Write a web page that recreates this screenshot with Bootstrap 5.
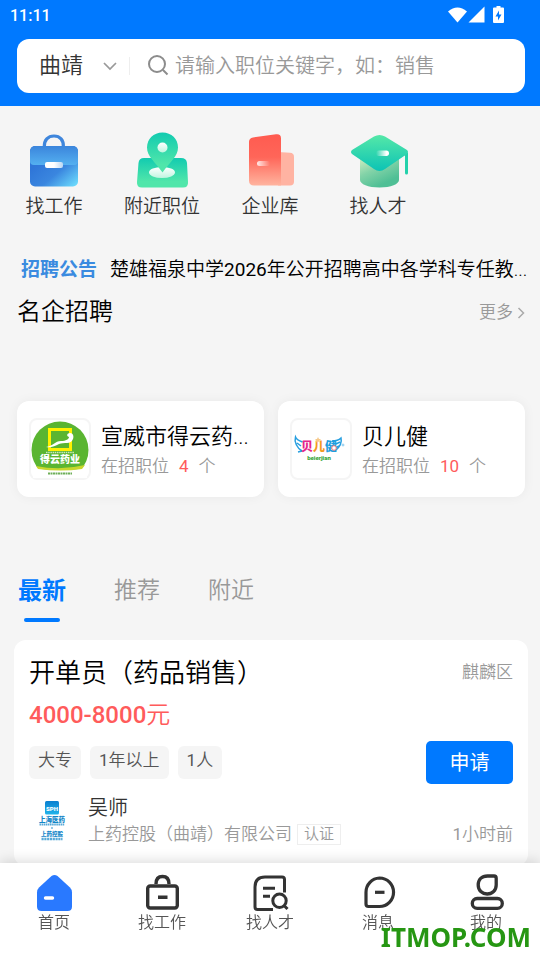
<!DOCTYPE html>
<html lang="zh-CN">
<head>
<meta charset="utf-8">
<meta name="viewport" content="width=device-width, initial-scale=1">
<title>招聘</title>
<link href="https://cdn.jsdelivr.net/npm/bootstrap@5.3.0/dist/css/bootstrap.min.css" rel="stylesheet">
<style>
  :root { --brand: #0079ff; --ink: #333; --muted: #999; --hot: #ff5b5b; --page: #f5f5f5; }
  body { font-family: Roboto, "Noto Sans CJK SC", sans-serif; font-weight: 350; background: var(--page); color: #000; padding-bottom: 94px; }
  a { color: inherit; text-decoration: none; }
  svg { display: block; flex: none; }
  .digits { font-weight: 400; }
  .txt-muted { color: var(--muted); }
  .txt-hot { color: var(--hot); }
  .gutter { padding-left: 17px; padding-right: 15px; }

  .topbar { background: var(--brand); padding-bottom: 13px; }
  .status { height: 31px; padding-left: 10px; padding-right: 34px; font-size: 16px; font-weight: 500; }
  .search { height: 54px; margin-top: 8px; border-radius: 12px; padding-left: 22px; padding-right: 16px; }
  .city { appearance: none; border: 0; background: none; padding: 0; width: 64px; font-size: 22px; color: var(--ink); font-weight: inherit; line-height: 30px; outline: 0; }
  .sep { width: 1px; height: 18px; background: #eee; margin: 0 17px 0 12px; }
  .query { border: 0; outline: 0; padding: 0; margin-left: 6px; font-size: 20px; font-weight: inherit; min-width: 0; line-height: 30px; }
  .query::placeholder { color: var(--muted); opacity: 1; }

  .shortcuts { padding-top: 24px; }
  .shortcuts a { font-size: 19px; line-height: 20px; color: var(--ink); gap: 7px; }

  .notice { margin-top: 39px; padding: 0 8px 0 21px; font-size: 19px; line-height: 28px; gap: 13px; }
  .notice strong { color: #3a8be0; font-weight: 700; }
  .section-title { margin: 12px 0 0; font-size: 24px; line-height: 32px; font-weight: inherit; }
  .more { font-size: 17px; gap: 4px; margin-top: 13px; }

  .firms { margin-top: 73px; gap: 14px; }
  .firm { flex: 1 1 0; min-width: 0; height: 96px; padding: 0 12px; border-radius: 12px; background: #fff; gap: 10px; box-shadow: 0 0 12px rgba(0,0,0,.05); }
  .firm-logo { width: 62px; height: 62px; border: 2px solid #f5f5f5; border-radius: 8px; flex: none; }
  .firm-text { padding-top: 2px; }
  .firm-name { font-size: 22px; line-height: 30px; }
  .firm-open { font-size: 17px; line-height: 24px; gap: 10px; margin-top: 2px; }

  .feeds { margin-top: 78px; gap: 48px; padding-left: 18px; }
  .feeds button { border: 0; background: none; padding: 0 0 15px; font-size: 23px; line-height: 32px; color: var(--muted); font-weight: inherit; position: relative; }
  .feeds .active { color: var(--brand); font-size: 24px; font-weight: 700; }
  .feeds .active::after { content: ""; position: absolute; left: 6px; right: 6px; bottom: 0; height: 4px; border-radius: 2px; background: var(--brand); }

  .job { margin: 18px 12px 0 14px; padding: 15px 15px 20px; border-radius: 12px; background: #fff; }
  .job h3 { font-size: 26px; line-height: 36px; font-weight: inherit; margin: 0; }
  .area { font-size: 17px; }
  .pay { font-size: 24px; line-height: 32px; margin-top: 8px; }
  .pay b { font-weight: 500; }
  .facts { margin-top: 10px; }
  .tags { gap: 9px; }
  .tag { background: var(--page); border-radius: 6px; padding: 0 9px 4px; font-size: 17px; line-height: 29px; color: #555; }
  .apply { background: var(--brand); color: #fff; border: 0; border-radius: 5px; width: 87px; height: 43px; font-size: 20px; }
  .poster { margin-top: 12px; gap: 13px; }
  .poster-name { font-size: 20px; line-height: 24px; color: var(--ink); }
  .poster-firm { font-size: 17px; line-height: 24px; margin-top: 2px; gap: 5px; }
  .verified { border: 1px solid #eee; padding: 0 6px; font-size: 15px; line-height: 19px; }

  .tabs-bottom { background: #fff; height: 97px; padding-top: 9px; box-shadow: 0 -2px 12px rgba(0,0,0,.14); }
  .tabs-bottom a { font-size: 16px; line-height: 20px; color: #555; gap: 1px; }
  .stamp { position: absolute; right: 9px; bottom: 5px; font-family: "Noto Sans", sans-serif; font-weight: 700; font-size: 26px; line-height: 36px; color: #269613; }
</style>
</head>
<body>
<header class="topbar">
  <div class="status d-flex justify-content-between align-items-center text-white">
    <span>11:11</span>
    <svg width="58" height="20" viewBox="0 0 58 20" fill="#fff">
      <path d="M0 5.500Q9.500-2.500 19 5.500L9.500 16.500Z"/>
      <path d="M36.500 .5V16.500H20.500Z"/>
      <path d="M46 1.500h2.500V0h4v1.500H55a1 1 0 0 1 1 1V16a1 1 0 0 1-1 1h-9a1 1 0 0 1-1-1V2.500a1 1 0 0 1 1-1Z"/>
      <path d="M51 4.500l-3.500 6H50v4l3.500-6H51Z" fill="#0079ff"/>
    </svg>
  </div>
  <div class="gutter">
    <form class="search d-flex align-items-center bg-white">
      <select class="city" aria-label="城市"><option>曲靖</option></select>
      <svg width="14" height="10" viewBox="0 0 14 10" fill="none" stroke="#999" stroke-width="1.700"><path d="M1 2l6 6 6-6"/></svg>
      <span class="sep"></span>
      <svg width="22" height="22" viewBox="0 0 22 22" fill="none" stroke="#8c8c8c" stroke-width="2"><circle cx="10" cy="9" r="8"/><path d="M16 15l4.500 4.500"/></svg>
      <input class="query flex-grow-1" type="search" aria-label="搜索职位" placeholder="请输入职位关键字，如：销售">
    </form>
  </div>
</header>

<main>
  <nav class="shortcuts row row-cols-5 g-0">
    <a href="#" class="col d-flex flex-column align-items-center">
      <svg width="60" height="60" viewBox="0 0 60 60">
        <defs>
          <linearGradient id="caseBody" x1=".3" y1=".3" x2="1" y2="1"><stop offset="0" stop-color="#2f76d8"/><stop offset=".45" stop-color="#3a86df"/><stop offset="1" stop-color="#70e2ff"/></linearGradient>
          <linearGradient id="caseFlap" x2="0" y2="1"><stop offset="0" stop-color="#3b85dc"/><stop offset="1" stop-color="#54b0f0"/></linearGradient>
          <linearGradient id="caseClasp"><stop offset="0" stop-color="#fff"/><stop offset=".5" stop-color="#fff"/><stop offset="1" stop-color="#b9d6f3"/></linearGradient>
        </defs>
        <path d="M20.300 17C20 10 24 6 30 6s9.700 4 9.400 11" fill="none" stroke="#3f86dc" stroke-width="3.200"/>
        <rect x="6" y="16" width="48" height="40.500" rx="5" fill="url(#caseBody)"/>
        <path d="M6 22q0-6 6-6h36q6 0 6 6v9q0 4-4 4H10q-4 0-4-4Z" fill="url(#caseFlap)"/>
        <rect x="21" y="32" width="18" height="6" rx="2" fill="url(#caseClasp)"/>
      </svg>
      <span>找工作</span>
    </a>
    <a href="#" class="col d-flex flex-column align-items-center">
      <svg width="60" height="60" viewBox="0 0 60 60">
        <defs>
          <linearGradient id="pinFill" x2="0" y2="1"><stop offset="0" stop-color="#12cbb0"/><stop offset=".8" stop-color="#50e6aa"/></linearGradient>
          <linearGradient id="pinHole" x2="0" y2="1"><stop offset="0" stop-color="#fff"/><stop offset="1" stop-color="#bff5e0"/></linearGradient>
        </defs>
        <path d="M12 28h37q5.500 0 6 5l1 19q.5 5.500-5 5.500H10q-5.500 0-5-5.500l1.500-19q.5-5 5.500-5Z" fill="url(#pinFill)"/>
        <ellipse cx="30" cy="42.500" rx="13" ry="5.500" fill="url(#pinHole)"/>
        <path d="M30.500 2.500C21.500 2.500 15 9 15 17.500c0 9 8 14 15.500 25C38 31.500 46 26.500 46 17.500 46 9 39.500 2.500 30.500 2.500Z" fill="url(#pinFill)"/>
        <circle cx="30.500" cy="17.500" r="5" fill="url(#pinHole)"/>
      </svg>
      <span>附近职位</span>
    </a>
    <a href="#" class="col d-flex flex-column align-items-center">
      <svg width="60" height="60" viewBox="0 0 60 60">
        <defs>
          <linearGradient id="tower" x2="0" y2="1"><stop offset="0" stop-color="#ff5b50"/><stop offset=".45" stop-color="#ff6659"/><stop offset="1" stop-color="#ffb49f"/></linearGradient>
          <linearGradient id="towerDoor"><stop offset="0" stop-color="#fff" stop-opacity=".85"/><stop offset="1" stop-color="#fff" stop-opacity="0"/></linearGradient>
        </defs>
        <path d="M38 22l12 .8q4 .3 4 4V51.500q0 4-4 4H38Z" fill="#ffb3a2"/>
        <path d="M13 7.500L36 4.200q5-.6 5 4V55.500H14q-5 0-5-5V12q0-4 4-4.500Z" fill="url(#tower)"/>
        <rect x="17" y="31" width="13" height="5" rx="2.500" fill="url(#towerDoor)"/>
      </svg>
      <span>企业库</span>
    </a>
    <a href="#" class="col d-flex flex-column align-items-center">
      <svg width="60" height="60" viewBox="0 0 60 60">
        <defs>
          <linearGradient id="capBase" x1="0" y1=".2" x2=".4" y2="1"><stop offset="0" stop-color="#d3efc2"/><stop offset=".5" stop-color="#83d3a8"/><stop offset="1" stop-color="#4fbf95"/></linearGradient>
          <linearGradient id="capTop" x2="0" y2="1"><stop offset="0" stop-color="#55e8a8"/><stop offset="1" stop-color="#0cc3b5"/></linearGradient>
          <linearGradient id="capButton"><stop offset="0" stop-color="#fff" stop-opacity="0"/><stop offset=".8" stop-color="#fff"/></linearGradient>
        </defs>
        <path d="M12 20H51V50c0 4-8 7.500-19.500 7.500S12 54 12 50Z" fill="url(#capBase)"/>
        <path d="M55 22l5 1V43q0 1.500-1.500 1.500T57 43V26Z" fill="#24d1ab"/>
        <path d="M4 20L26 6.500q5.500-3 11 0L59 20q2 2 0 4L37 39q-5.500 4-11 0L4 24q-2-2 0-4Z" fill="url(#capTop)"/>
        <rect x="28" y="20.500" width="13" height="5.500" rx="2.700" fill="url(#capButton)"/>
      </svg>
      <span>找人才</span>
    </a>
  </nav>

  <div class="notice d-flex">
    <strong class="flex-shrink-0">招聘公告</strong>
    <a href="#" class="text-nowrap">楚雄福泉中学<span class="digits">2026</span>年公开招聘高中各学科专任教...</a>
  </div>

  <div class="gutter d-flex justify-content-between align-items-center">
    <h2 class="section-title">名企招聘</h2>
    <a href="#" class="more txt-muted d-flex align-items-center">更多
      <svg width="8" height="12" viewBox="0 0 8 12" fill="none" stroke="#aaa" stroke-width="1.500"><path d="M1.500 1l5 5-5 5"/></svg>
    </a>
  </div>

  <div class="firms gutter d-flex">
    <a href="#" class="firm d-flex align-items-center">
      <span class="firm-logo d-flex align-items-center justify-content-center">
        <svg width="58" height="58" viewBox="0 0 58 58">
          <circle cx="29" cy="30" r="28.500" fill="#5ab531"/>
          <path d="M2 48q27 4 54 0V58H2Z" fill="#fff"/>
          <path d="M5 46q24 5 49-1l-3 4q-21 3-44 0Z" fill="#c8d72c"/>
          <rect x="18.500" y="9.500" width="21" height="20" fill="none" stroke="#fff100" stroke-width="3"/>
          <path d="M15 27c7-1 9-6 15-6 5 0 8-2 8-4-3-1-2-4 1-4 3 0 4 3 3 6-2 6-9 3-14 5-4 2-8 4-13 3Z" fill="#fff"/>
          <path d="M15 32.500h28" stroke="#fff" stroke-width="1.500" stroke-dasharray="1.500 .7" opacity=".7"/>
          <text x="29" y="43" text-anchor="middle" font-size="10" font-weight="900" fill="#fff">得云药业</text>
          <path d="M17 53.500h24" stroke="#4a9c30" stroke-width="2" stroke-dasharray="2 .5" opacity=".8"/>
        </svg>
      </span>
      <span class="firm-text flex-grow-1">
        <span class="firm-name d-block text-nowrap">宣威市得云药...</span>
        <span class="firm-open d-flex txt-muted">在招职位<span class="txt-hot digits">4</span>个</span>
      </span>
    </a>
    <a href="#" class="firm d-flex align-items-center">
      <span class="firm-logo d-flex align-items-center justify-content-center">
        <svg width="58" height="58" viewBox="0 0 58 58">
          <g fill="none" stroke="#279fe0" stroke-width="1.500">
            <path d="M10 31C5 28 2 22 3.500 17c1 3 4 4 7 5M10 31l-4 1M5 23l4 3"/>
            <path d="M40 21c5 0 7-1 9-3 1 4-1 9-6 13M48 22l-4 2M47 26l-4 2"/>
          </g>
          <text y="31" font-size="12" font-weight="900"><tspan fill="#e5268b" x="9">贝</tspan><tspan fill="#f39a1e">儿</tspan><tspan fill="#1e9ede">健</tspan></text>
          <path d="M26 17l1 2h2l-1.500 1.500.5 2-2-1-2 1 .5-2L23 19h2Z" fill="#f6c98a"/>
          <circle cx="42" cy="28" r="2.300" fill="#fff" stroke="#e77"/>
          <circle cx="51" cy="25" r="1" fill="none" stroke="#279fe0" stroke-width=".5"/>
          <text x="27" y="39.500" text-anchor="middle" font-size="6" font-weight="900" fill="#3aa63c">beierjian</text>
        </svg>
      </span>
      <span class="firm-text flex-grow-1">
        <span class="firm-name d-block text-nowrap">贝儿健</span>
        <span class="firm-open d-flex txt-muted">在招职位<span class="txt-hot digits">10</span>个</span>
      </span>
    </a>
  </div>

  <div class="feeds d-flex" role="tablist">
    <button type="button" role="tab" class="active" aria-selected="true">最新</button>
    <button type="button" role="tab">推荐</button>
    <button type="button" role="tab">附近</button>
  </div>

  <article class="job">
    <div class="d-flex justify-content-between align-items-center">
      <h3>开单员（药品销售）</h3>
      <span class="area txt-muted">麒麟区</span>
    </div>
    <div class="pay txt-hot"><b>4000-8000</b>元</div>
    <div class="facts d-flex justify-content-between align-items-center">
      <div class="tags d-flex">
        <span class="tag">大专</span><span class="tag"><span class="digits">1</span>年以上</span><span class="tag"><span class="digits">1</span>人</span>
      </div>
      <button type="button" class="apply">申请</button>
    </div>
    <div class="poster d-flex">
      <svg width="46" height="50" viewBox="0 0 46 50">
        <defs><linearGradient id="sph" x2="0" y2="1"><stop offset="0" stop-color="#0a7fd0"/><stop offset="1" stop-color="#22b4ea"/></linearGradient></defs>
        <rect x="16" y="5" width="14" height="13.500" rx="1.500" fill="url(#sph)"/>
        <g text-anchor="middle" font-weight="900" fill="#1286c8">
          <text x="23" y="15" font-size="6" fill="#fff">SPH</text>
          <text x="23" y="26" font-size="6.500">上海医药</text>
          <circle cx="23" cy="32" r=".8"/>
          <text x="23" y="40" font-size="5.500">上药控股</text>
        </g>
        <g stroke="#1286c8" stroke-width="1.800" opacity=".7"><path d="M10.500 28.500h25" stroke-dasharray="1.600 .5"/><path d="M12.500 43h21" stroke-width="2.600" stroke-dasharray="2.200 .6"/></g>
      </svg>
      <div class="flex-grow-1">
        <div class="poster-name">吴师</div>
        <div class="poster-firm d-flex align-items-center txt-muted">
          <span>上药控股（曲靖）有限公司</span>
          <span class="verified">认证</span>
          <span class="ms-auto"><span class="digits">1</span>小时前</span>
        </div>
      </div>
    </div>
  </article>
</main>

<nav class="tabs-bottom fixed-bottom">
  <div class="row row-cols-5 g-0">
    <a href="#" class="col d-flex flex-column align-items-center" aria-current="page">
      <svg width="40" height="40" viewBox="0 0 40 40"><path d="M17.500 4q3-2.200 6 0L36 15.500q2 2 2 5V34.500q0 4.500-4.500 4.500h-26Q3 39 3 34.500V20.500q0-3 2-5Z" fill="#2979ff"/><path d="M11.500 26h7" stroke="#fff" stroke-width="3.400" stroke-linecap="round"/></svg>
      <span>首页</span>
    </a>
    <a href="#" class="col d-flex flex-column align-items-center">
      <svg width="40" height="40" viewBox="0 0 40 40" fill="none" stroke="#333" stroke-width="3.400"><rect x="5.700" y="14" width="29.600" height="22" rx="2.500"/><path d="M14 12c0-5 2.500-7.500 6.500-7.500s6.500 2.500 6.500 7.500M16 25.200h9.500"/></svg>
      <span>找工作</span>
    </a>
    <a href="#" class="col d-flex flex-column align-items-center">
      <svg width="40" height="40" viewBox="0 0 40 40" fill="none" stroke="#333" stroke-width="3"><path d="M34.500 20.500V7.500q0-2.500-2.500-2.500H15Q5 5 5 15V35Q5 37.500 7.500 37.500H23M13 16.200h12M13 24.200h7"/><circle cx="29.500" cy="28.700" r="6.700"/><path d="M34 33.500l3.500 3.500"/></svg>
      <span>找人才</span>
    </a>
    <a href="#" class="col d-flex flex-column align-items-center">
      <svg width="40" height="40" viewBox="0 0 40 40" fill="none" stroke="#333" stroke-width="3.200"><path d="M21.500 6a14 14.200 0 0 1 0 28.500H10.500Q8 34.500 8 32V20.200A14 14.200 0 0 1 21.500 6Z"/><path d="M17 20.300h9.500"/></svg>
      <span>消息</span>
    </a>
    <a href="#" class="col d-flex flex-column align-items-center">
      <svg width="40" height="40" viewBox="0 0 40 40" fill="none" stroke="#333" stroke-width="3.300"><path d="M21.500 4H28q2.200 0 2.200 2.200V13c0 5.500-4 9-9 9s-9-3.500-9-9c0-5.500 3.500-9 9.300-9Z"/><rect x="6.300" y="26.500" width="30" height="9.800" rx="4.900"/></svg>
      <span>我的</span>
    </a>
  </div>
  <span class="stamp">ITMOP.COM</span>
</nav>
<script src="https://cdn.jsdelivr.net/npm/bootstrap@5.3.0/dist/js/bootstrap.bundle.min.js"></script>
</body>
</html>
